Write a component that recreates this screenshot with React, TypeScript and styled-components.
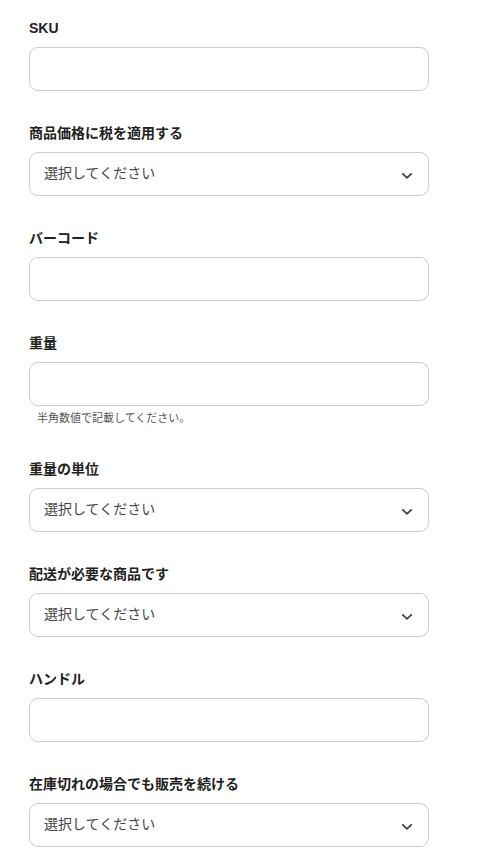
import React from 'react';
import styled, { createGlobalStyle } from 'styled-components';

const GlobalStyle = createGlobalStyle`
  * { box-sizing: border-box; }
  body {
    margin: 0;
    background: #fff;
    font-family: "Liberation Sans", "Noto Sans CJK JP", sans-serif;
    color: #222;
  }
`;

type Field = {
  label: string;
  kind: 'input' | 'select';
  hint?: string;
};

const fields: Field[] = [
  { label: 'SKU', kind: 'input' },
  { label: '商品価格に税を適用する', kind: 'select' },
  { label: 'バーコード', kind: 'input' },
  { label: '重量', kind: 'input', hint: '半角数値で記載してください。' },
  { label: '重量の単位', kind: 'select' },
  { label: '配送が必要な商品です', kind: 'select' },
  { label: 'ハンドル', kind: 'input' },
  { label: '在庫切れの場合でも販売を続ける', kind: 'select' },
];

export default function App() {
  return (
    <>
      <GlobalStyle />
      <Form>
        {fields.map((f) => (
          <FieldGroup key={f.label}>
            <Label>{f.label}</Label>
            {f.kind === 'input' ? (
              <TextInput type="text" />
            ) : (
              <SelectBox>
                <Placeholder>選択してください</Placeholder>
                <svg width="12" height="8" viewBox="0 0 12 8" fill="none">
                  <path
                    d="M1.8 1.8L6 5.9L10.2 1.8"
                    stroke="#444"
                    strokeWidth="1.8"
                    strokeLinecap="round"
                    strokeLinejoin="round"
                  />
                </svg>
              </SelectBox>
            )}
            {f.hint && <Hint>{f.hint}</Hint>}
          </FieldGroup>
        ))}
      </Form>
    </>
  );
}

const Form = styled.div`
  display: flex;
  flex-direction: column;
  gap: 32px;
  padding: 18px 0 0 29px;
  width: 429px;
`;

const FieldGroup = styled.div`
  display: flex;
  flex-direction: column;
`;

const Label = styled.div`
  font-size: 14px;
  line-height: 20px;
  font-weight: 700;
  color: #222;
  margin-bottom: 9px;
`;

const TextInput = styled.input`
  height: 44px;
  width: 400px;
  border: 1px solid #c8ccd2;
  border-radius: 9px;
  background: #fff;
  padding: 0 14px;
  font-size: 14px;
  font-family: inherit;
  outline: none;
`;

const SelectBox = styled.div`
  height: 44px;
  width: 400px;
  border: 1px solid #c8ccd2;
  border-radius: 9px;
  background: #fff;
  padding: 0 15px 0 14px;
  display: flex;
  align-items: center;
  justify-content: space-between;
  svg {
    margin-top: 3px;
  }
`;

const Placeholder = styled.span`
  font-size: 14px;
  line-height: 20px;
  color: #444;
  margin-top: -3px;
`;

const Hint = styled.div`
  font-size: 11px;
  line-height: 17px;
  color: #555;
  margin-top: 4px;
  padding-left: 8px;
`;
